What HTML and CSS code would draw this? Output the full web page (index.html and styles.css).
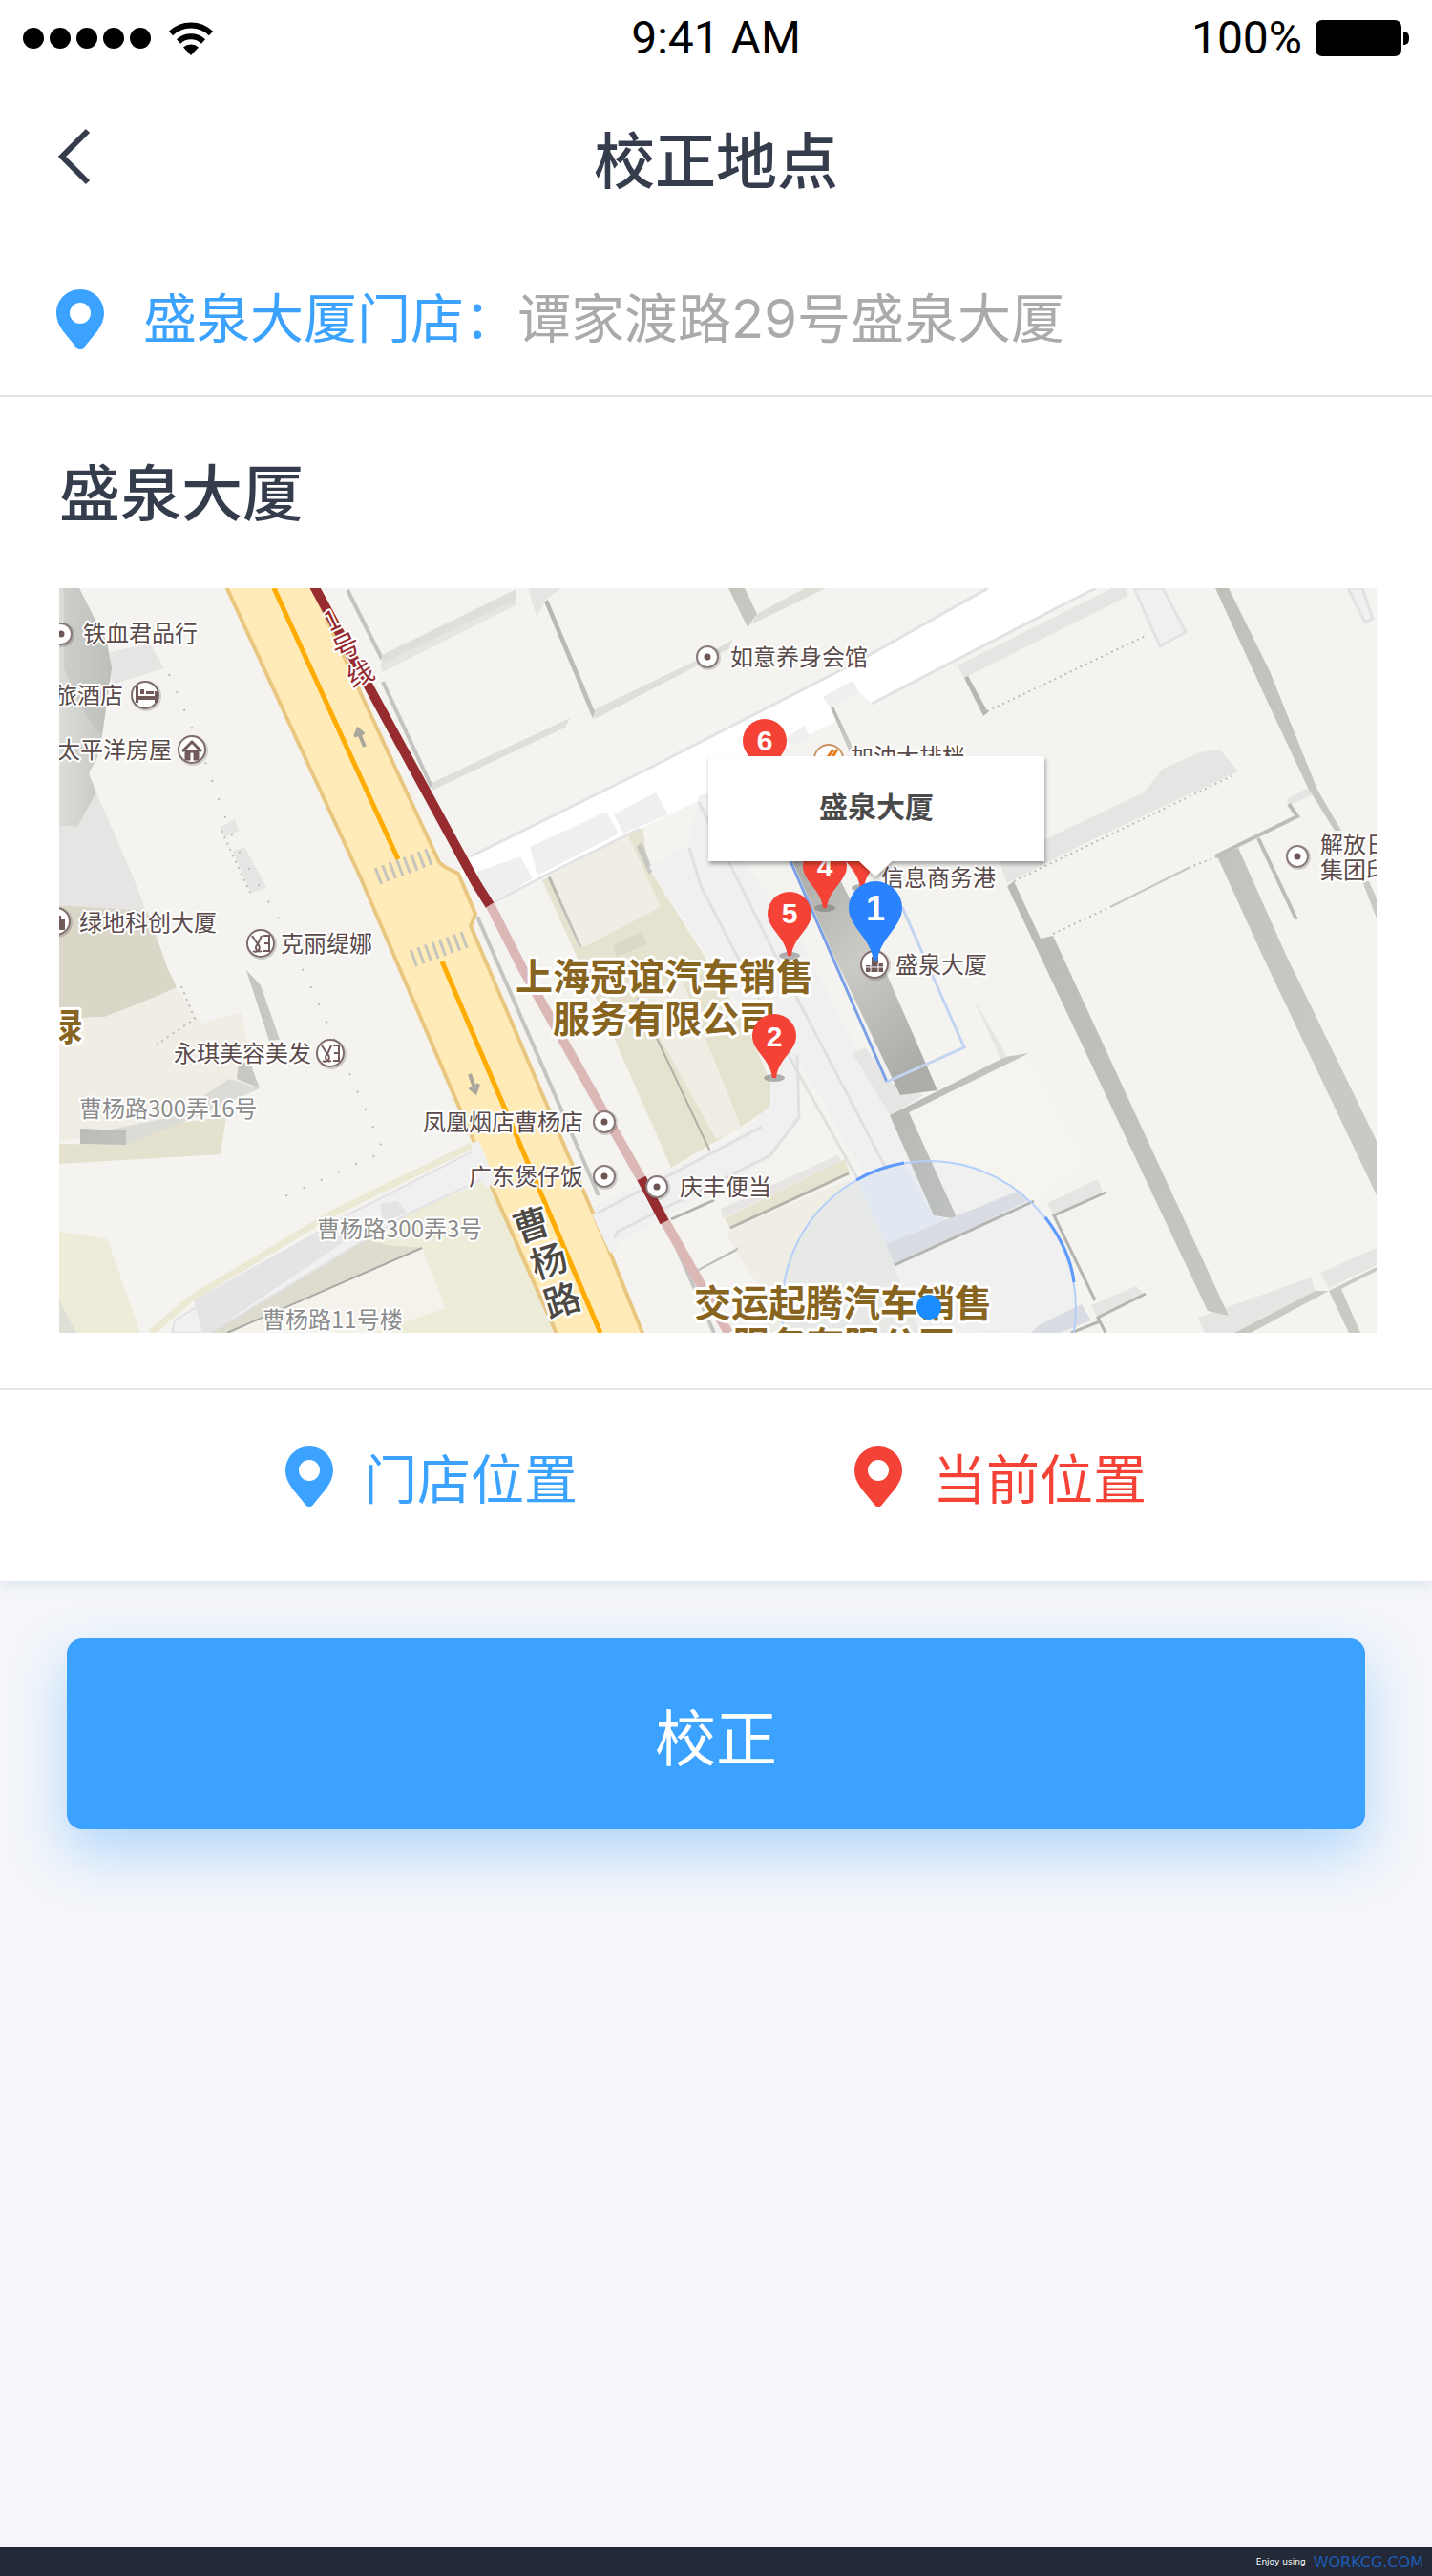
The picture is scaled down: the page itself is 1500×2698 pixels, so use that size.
FILE: index.html
```html
<!DOCTYPE html>
<html lang="zh-CN">
<head>
<meta charset="utf-8">
<meta name="viewport" content="width=device-width, initial-scale=1">
<title>校正地点</title>
<link rel="stylesheet" href="styles.css">
</head>
<body>

<div class="status-bar">
  <div class="status-left">
    <svg class="signal" viewBox="0 0 134 22" aria-hidden="true">
      <circle cx="11" cy="11" r="11"/>
      <circle cx="39" cy="11" r="11"/>
      <circle cx="67" cy="11" r="11"/>
      <circle cx="95" cy="11" r="11"/>
      <circle cx="123" cy="11" r="11"/>
    </svg>
    <svg class="wifi" viewBox="0 0 48 36" aria-hidden="true">
      <path d="M24 36l-8-8.500a12 12 0 0 1 16 0z"/>
      <path d="M3 13a30 30 0 0 1 42 0M11 21.500a19 19 0 0 1 26 0" fill="none" stroke="#000" stroke-width="6"/>
    </svg>
  </div>
  <div class="status-time">9:41 AM</div>
  <div class="status-right">
    <span>100%</span>
    <svg class="battery" viewBox="0 0 98 38" aria-hidden="true">
      <rect width="90" height="38" rx="7"/>
      <path d="M92 12c4 0 6 2 6 7s-2 7-6 7z"/>
    </svg>
  </div>
</div>

<header class="nav">
  <button class="back" type="button" aria-label="返回">
    <svg viewBox="0 0 34 60" aria-hidden="true"><path d="M31 3L4 30l27 27"/></svg>
  </button>
  <h1>校正地点</h1>
</header>

<main>
  <div class="address">
    <svg class="pin blue" viewBox="0 0 50 63" aria-hidden="true"><path d="M25 0C11 0 0 11 0 25c0 14 11 23 21 36 2 3 6 3 8 0 10-13 21-22 21-36C50 11 39 0 25 0zm0 14a11 11 0 1 1 0 22 11 11 0 0 1 0-22z"/></svg>
    <p><span class="blue">盛泉大厦门店：</span>谭家渡路29号盛泉大厦</p>
  </div>

  <section class="place">
    <h2>盛泉大厦</h2>
    <svg class="map" viewBox="62 616 1380 780" role="img" aria-label="盛泉大厦附近地图">
      <defs>
        <linearGradient id="wall" x1="0" y1="0" x2="1" y2="0.4">
          <stop offset="0" stop-color="#b4b6b1"/>
          <stop offset="1" stop-color="#cacac4"/>
        </linearGradient>
        <linearGradient id="tower" x1="0" y1="0" x2="0.6" y2="1">
          <stop offset="0" stop-color="#a9aaa6"/>
          <stop offset="0.5" stop-color="#cbcbc6"/>
          <stop offset="1" stop-color="#adaea9"/>
        </linearGradient>
        <linearGradient id="round" x1="0" y1="0" x2="1" y2="0">
          <stop offset="0" stop-color="#dcddd8"/>
          <stop offset="1" stop-color="#c2c4bf"/>
        </linearGradient>
        <filter id="drop" x="-10%" y="-20%" width="120%" height="150%">
          <feDropShadow dx="1" dy="3" stdDeviation="2" flood-color="#000" flood-opacity="0.35"/>
        </filter>
        <g id="marker">
          <ellipse cx="0" cy="44" rx="11" ry="4" fill="#777" opacity="0.55"/>
          <path d="M0-23a23 23 0 0 0-23 23c0 16 19 24 21 44h4C4 24 23 16 23 0A23 23 0 0 0 0-23z"/>
        </g>
        <g id="dot">
          <circle r="13" cx="1" cy="1" fill="#000" opacity="0.15"/>
          <circle r="11" fill="#fff" stroke="#8a7a7a" stroke-width="2"/>
          <circle r="3.500" fill="#6d5555"/>
        </g>
        <g id="badge">
          <circle r="16" cx="1" cy="1" fill="#000" opacity="0.15"/>
          <circle r="14" fill="#fff" stroke="#806c6c" stroke-width="2"/>
        </g>
        <g id="salon">
          <use href="#badge"/>
          <path d="M-9-8l6 9 4-9M-8 8a3 3 0 1 0 5-7 3 3 0 1 0 4 7M3-8h6V8H3M4 0h5" fill="none" stroke="#725a5a" stroke-width="2"/>
        </g>
      </defs>

      <rect x="62" y="616" width="1380" height="780" fill="#f4f3ef"/>

      <!-- west blocks -->
      <path fill="#e6e5e4" d="M115 683l42-9 15 26-55 17zM62 865l19 1 20-36 39 90 36 95-114-66zM230 867l16-9 4 12-14 7zM244 892l12-5 23 42-16 7z"/>
      <path fill="url(#round)" d="M62 616h21l17 34 12 23 5 27-2 15-8 55-5 23-9 17 8 20-20 36-19-1z"/>
      <path fill="#b4b6b1" opacity="0.35" d="M67 616h16l29 57 5 27-10 70q-20-20-40-70z"/>
      <path fill="#dad7c9" d="M62 949h13l79 5 22 61 9 19-35 16-40 15-48 2z"/>
      <path fill="#efede4" d="M62 1067l48-2 75-30 26 37 42-12 9 48-7 32-42 15-33 25-118 15z"/>
      <path fill="#e4e1cf" d="M62 1198l70 1 38-21 67-8-6 39-169 10z"/>
      <path fill="#dcdcd7" d="M272 1140l-32-10-60 40-70 14-26-2v16l48 1 35-14 50-20z"/>
      <path fill="url(#wall)" d="M84 1182l48 2v15l-48-1zM258 1016l15 16 20 57-11 1zM250 1113h12l10 27-24-10z"/>
      <path fill="#edecd9" d="M62 1290l50 7 35 99H62z"/>
      <path fill="#e0dfd5" d="M62 1362l18 34H62z"/>
      <path fill="none" stroke="#bbb" stroke-width="2" stroke-dasharray="2 18" d="M177 706l30 70 40 110 50 85 50 110 55 125-110 50"/>
      <path fill="none" stroke="#bbb" stroke-width="2" stroke-dasharray="2 5" d="M232 870l30 65M190 1033l14 34-40 27"/>

      <!-- 曹杨路300弄 -->
      <path fill="#edecd9" d="M228 1396l202-126 82-35 72 161z"/>
      <path fill="#dedccf" d="M215 1396l160-100 30 8 37 3-204 89z"/>
      <path fill="#f4f2ea" d="M238 1396l204-89 25 63-77 26z"/>
      <path fill="none" stroke="#aaa9a3" stroke-width="2" d="M238 1396l204-89"/>
      <path fill="none" stroke="#ebe8d3" stroke-width="7" d="M494 1200l-144 70-150 90-42 36"/>
      <path fill="#f0f0f1" stroke="#e2e2e4" stroke-width="2" d="M497 1205l-142 72-172 106-3 13h40l210-126 86-40z"/>
      <path fill="#e4e4e4" d="M203 1362l120-67 50-3-153 104h-8zM398 1261l18-3 10 12-25 10z"/>

      <!-- north blocks -->
      <path fill="none" stroke="#c3c4c0" stroke-width="4" d="M364 618l36 72M401 714l51 110"/>
      <path fill="#dfdfda" d="M400 686l141-69v11l-141 69zM452 820l145-68-5 10-140 66zM621 744l112-54 34-20-4 10-140 73zM793 643l50-27h22l-78 38z"/>
      <path fill="url(#wall)" d="M570 630l4-2 49 117-2 8zM763 616h17l13 27-10 14z"/>
      <path fill="#e6e5e4" d="M400 704l140-70v-6l-142 68zM553 616h35l-16 12-10 18z"/>

      <!-- white road -->
      <path fill="#fff" d="M493 897l407-205 135-76h115l-30 14-207 107-70 35-110 66-63 30-95 47-58 30-37-30z"/>
      <path fill="none" stroke="#e2e2e4" stroke-width="3" d="M493 897l190-94 217-111 135-76M913 737l207-107 28-14M517 945l58-30 95-47"/>
      <path fill="#efefef" d="M555 887l80-37 13 23-85 44zM643 853l44-23 13 23-47 20zM500 913l45-16 13 23-41 25-15-10zM862 730l31-17 7 12-30 17zM822 774l20-14 7 12-20 10z"/>
      <path fill="#f4f3ef" d="M870 742l30-17 13 12-8 50-14 5z"/>
      <path fill="url(#wall)" d="M870 741l3-1 18 38 3 10h-4z"/>

      <!-- dealership plot -->
      <path fill="#e5e3cf" d="M568 922l105-55 7 43 57 90 46 77 24 56v27l-34 22-70 41-60-136z"/>
      <path fill="#efede4" d="M577 917l81-42 34 75-82 43zM668 1045l46-20 63 157-27 11z"/>
      <path fill="#dad8c8" d="M642 990l30-14 6 13-32 13z"/>
      <path fill="#f4f3ef" d="M675 880l38-20 9 28-42 24z"/>
      <path fill="url(#wall)" d="M576 917l34 76-4-3-32-70zM667 887l5-5 12 30-4 4z"/>
      <path fill="none" stroke="#b0b0a9" stroke-width="2" d="M668 1045l84 178"/>

      <!-- inner lanes -->
      <path fill="#f0f0f1" d="M680 908l42-24 10-51 12-2 116 71 105 250 18 100-53 23-97-172 5 25v45l-33 42-168 92-17-42 153-75 37-35-2-30-25-60z"/>
      <path fill="#f4f3ef" d="M735 842l12-8 80 60 60 130 30 76-17 5-60-120z"/>
      <path fill="none" stroke="#e0e0e1" stroke-width="3" d="M722 888l12 40 96 185 90 160 27-13-115-220-100-200M835 1105l2 65-30 40-160 80-12 20M623 1272l137-72 38-20"/>
      <path fill="#e5e3cf" d="M759 1276l126-62 5 15-125 58z"/>
      <path fill="#e6e5e4" d="M755 1266l122-56 4 6-124 60z"/>
      <path fill="#efede4" d="M760 1290l130-55-10 60-80 60-20-30z"/>
      <path fill="#ecede5" d="M885 1238l20 0 80 158H800q20-90 85-158z"/>
      <path fill="none" stroke="#b4b4ac" stroke-width="3" d="M765 1286l124-57M703 1277l45-20"/>
      <path fill="#bcbdb9" d="M724 1333l50-27-2 4-44 23z"/>
      <path fill="#e6e5e4" d="M893 1103l14-6 23 36 37 14-35 21z"/>

      <!-- main tower and south blocks -->
      <path fill="url(#tower)" d="M830 902h40l50 98 62 142-39 5-70-147z"/>
      <path fill="none" stroke="#7aa1e8" stroke-width="3" d="M828 902l101 231"/>
      <path fill="none" stroke="#c3d4f3" stroke-width="3" d="M929 1133l81-36-65-147"/>
      <path fill="#f5f4ef" d="M952 1166l126-60 60 110-53 42-83 20z"/>
      <path fill="url(#wall)" d="M932 1168l121-61 25-4-126 62 51 112-25-4z"/>
      <path fill="#e6e5e4" d="M1018 1042l37 65-7 2zM1097 1260l53-25 5 13-52 24zM1143 1367l47-20 8 8-48 25z"/>

      <circle cx="973" cy="1370" r="154" fill="#4c8cff" fill-opacity="0.03"/>
      <path fill="#e1e8f1" d="M897 1235l50-16 31 54 20 6-70 24z"/>
      <path fill="#d9dde3" d="M928 1303l140-56 10 10-141 68zM1088 1388l45-22 10 17-33 13h-30z"/>
      <path fill="#f0f0f0" d="M937 1327l143-68 30 40 14 67-40 24-90 6h-30z"/>
      <path fill="none" stroke="#b4b4b0" stroke-width="3" d="M937 1325l146-67M1158 1249l-54 24 43 89M1200 1355l-50 25 8 16M1122 1396l30-12"/>
      <circle cx="973" cy="1370" r="154" fill="none" stroke="#b5cffa" stroke-width="2"/>
      <path fill="none" stroke="#5f9bff" stroke-width="3" d="M1095 1275q26 34 30 68M897 1236q22-13 50-18"/>

      <!-- east blocks -->
      <path fill="#e6e5e4" d="M1003 697l162-81h15v9l-170 85zM1055 925l-8-22 50-25 101-48 20-25 39-17 21-3 19 23-160 75zM1348 837l22-12 5 7-25 12zM1255 1380l118-42 5 14-85 44h-31zM1383 1333l59-26v18l-50 24z"/>
      <path fill="url(#wall)" d="M1010 710l4-2 21 38-5 4zM1273 616h14l43 87 50 124 25 43h-7l-28-45-40-85zM1427 923h7l8 18v21zM1275 897l22-9 50 112 95 195v57l-120-252zM1055 928l7-5 28 60 13-3 184 398-22-5zM1293 1396l85-44h14l-82 44zM1392 1352l50-25v4l-37 19 20 46h-12z"/>
      <path fill="#f0f0f1" stroke="#e2e2e4" stroke-width="3" d="M1188 616l27 61 27-15-24-46zM1412 616l18 36 8-4-11-32z"/>
      <path fill="none" stroke="#bcbdb9" stroke-width="4" d="M1273 897l86-42-9-13M1318 878l40 85"/>
      <path fill="none" stroke="#bcbdb9" stroke-width="2" stroke-dasharray="2 4" d="M1034 745l168-80M1062 923l232-112M1103 978l60-28M1245 909l30-12"/>
      <path fill="none" stroke="#c6c7c3" stroke-width="2" d="M1163 950l82-41"/>

      <!-- 曹杨路 -->
      <path fill="#ffebb8" stroke="#e9c781" stroke-width="4" d="M235 610l143 310 119 277 18 46 72 163h90l-40-99-14-32-130-305 5-13-18-42-14-7-6-5-79-170-56-123z"/>
      <path fill="#f0f0f1" d="M494 1197l8-2 16 40-7 10-16-22zM620 1272l12-3 16 40-9 3z"/>
      <path fill="none" stroke="#ffab00" stroke-width="5" d="M287 616l130 284M463 1007l166 389"/>
      <path fill="none" stroke="#c6c5bd" stroke-width="18" stroke-dasharray="3 5" d="M395 918l58-22M432 1004l58-21"/>
      <path fill="none" stroke="#a9a79c" stroke-width="4" d="M382 782l-6-14m-4 4l3-8 6 5M492 1125l5 14m4-4l-3 9-6-5"/>
      <path fill="none" stroke="#c4c5c2" stroke-width="4" d="M500 960l127 292M697 1280l51 116"/>

      <!-- metro line -->
      <path fill="none" stroke="#dbb8b5" stroke-width="10" d="M513 947l34 67 125 221 25 45 66 116"/>
      <path fill="none" stroke="#962c2f" stroke-width="10" d="M328 612l170 312 15 24M672 1234l24 46"/>

      <g class="metro-name">
        <text transform="translate(345 662) rotate(-25)">1</text>
        <text transform="translate(354 692) rotate(-25)">号</text>
        <text transform="translate(369 721) rotate(-25)">线</text>
      </g>
      <g class="road-name">
        <text transform="translate(543 1302) rotate(-18)">曹</text>
        <text transform="translate(561 1340) rotate(-18)">杨</text>
        <text transform="translate(575 1381) rotate(-18)">路</text>
      </g>

      <g class="poi">
        <text x="87" y="672">铁血君品行</text>
        <text x="57" y="737">旅酒店</text>
        <text x="60" y="794">太平洋房屋</text>
        <text x="83" y="975">绿地科创大厦</text>
        <text x="294" y="997">克丽缇娜</text>
        <text x="182" y="1112">永琪美容美发</text>
        <text x="443" y="1184">凤凰烟店曹杨店</text>
        <text x="491" y="1241">广东煲仔饭</text>
        <text x="712" y="1252">庆丰便当</text>
        <text x="765" y="697">如意养身会馆</text>
        <text x="891" y="801">加油大排档</text>
        <text x="923" y="928">信息商务港</text>
        <text x="938" y="1019">盛泉大厦</text>
        <text x="1383" y="893">解放日报</text>
        <text x="1383" y="920">集团印务</text>
      </g>
      <g class="poi lane">
        <text x="83" y="1170">曹杨路300弄16号</text>
        <text x="332" y="1296">曹杨路300弄3号</text>
        <text x="275" y="1391">曹杨路11号楼</text>
      </g>
      <g class="company">
        <text x="47" y="1090">绿</text>
        <text x="540" y="1037">上海冠谊汽车销售</text>
        <text x="579" y="1081">服务有限公司</text>
        <text x="727" y="1379">交运起腾汽车销售</text>
        <text x="767" y="1423">服务有限公司</text>
      </g>

      <use href="#dot" x="64" y="664"/>
      <use href="#dot" x="633" y="1175"/>
      <use href="#dot" x="633" y="1232"/>
      <use href="#dot" x="688" y="1243"/>
      <use href="#dot" x="741" y="688"/>
      <use href="#dot" x="1359" y="897"/>
      <use href="#salon" x="273" y="988"/>
      <use href="#salon" x="346" y="1103"/>
      <use href="#badge" x="152" y="728"/>
      <path fill="#725a5a" d="M142 719h3v10h17v-5h3v12h-3v-3h-17v3h-3zM147 722h4v5h-4zM153 724h8v3h-8z"/>
      <use href="#badge" x="201" y="785"/>
      <path fill="none" stroke="#725a5a" stroke-width="3" d="M191 787l10-10 10 10M195 785v10h3v-8h6v8h3v-10"/>
      <use href="#badge" x="59" y="965"/>
      <path fill="#725a5a" d="M61 959h3v4h4v11h-7z"/>
      <use href="#badge" x="916" y="1010"/>
      <path fill="#725a5a" d="M913 1002h7v7h5v9h-18v-7h6z"/>
      <path stroke="#fff" stroke-width="1" d="M907 1013h18M912 1009v9M920 1009v9"/>
      <circle cx="868" cy="795" r="15" fill="#fff" stroke="#c7925f" stroke-width="2"/>
      <path fill="none" stroke="#e57d22" stroke-width="3" d="M867 793l6-8M872 793l5-8"/>

      <g fill="#f44336">
        <use href="#marker" x="801" y="776"/>
        <use href="#marker" x="903" y="886"/>
        <use href="#marker" x="864" y="907"/>
        <use href="#marker" x="827" y="957"/>
        <use href="#marker" x="811" y="1085"/>
      </g>
      <path fill="#2a82ff" d="M917 923a28 28 0 0 0-28 28c0 20 24 32 26 56h4c2-24 26-36 26-56a28 28 0 0 0-28-28z"/>
      <g class="marker-no">
        <text x="801" y="786">6</text>
        <text x="864" y="918">4</text>
        <text x="827" y="967">5</text>
        <text x="811" y="1096">2</text>
        <text class="big" x="917" y="964">1</text>
      </g>
      <circle cx="973" cy="1369" r="13" fill="#1a8cff"/>

      <path fill="#fff" filter="url(#drop)" d="M742 792h352v110H934l-17 16-17-16H742z"/>
      <text class="info" x="918" y="856">盛泉大厦</text>
    </svg>
  </section>

  <div class="legend">
    <div class="legend-item blue">
      <svg class="pin" viewBox="0 0 50 63" aria-hidden="true"><path d="M25 0C11 0 0 11 0 25c0 14 11 23 21 36 2 3 6 3 8 0 10-13 21-22 21-36C50 11 39 0 25 0zm0 14a11 11 0 1 1 0 22 11 11 0 0 1 0-22z"/></svg>
      <span>门店位置</span>
    </div>
    <div class="legend-item red">
      <svg class="pin" viewBox="0 0 50 63" aria-hidden="true"><path d="M25 0C11 0 0 11 0 25c0 14 11 23 21 36 2 3 6 3 8 0 10-13 21-22 21-36C50 11 39 0 25 0zm0 14a11 11 0 1 1 0 22 11 11 0 0 1 0-22z"/></svg>
      <span>当前位置</span>
    </div>
  </div>
</main>

<div class="actions">
  <button class="submit" type="button">校正</button>
</div>

<footer class="credit">
  <span>Enjoy using</span>
  <a href="#">WORKCG.COM</a>
</footer>

</body>
</html>
```
FILE: styles.css
```css
* {
  box-sizing: border-box;
}

body {
  display: flex;
  flex-direction: column;
  min-height: 100vh;
  margin: 0;
  background: #f4f6fa;
  color: #353d4d;
  font-family: "Noto Sans CJK SC", sans-serif;
}

h1, h2, p {
  margin: 0;
}

h1, h2 {
  font-size: 64px;
  font-weight: 500;
  line-height: 80px;
}

button {
  border: 0;
  padding: 0;
  font-family: inherit;
  cursor: pointer;
}

.blue {
  color: #3ba2ff;
}

.red {
  color: #f44336;
}

/* status bar */
.status-bar {
  display: grid;
  grid-template-columns: 1fr auto 1fr;
  align-items: center;
  height: 80px;
  padding: 0 24px;
  background: #fff;
  color: #000;
  font-family: Roboto, sans-serif;
  font-size: 48px;
  line-height: 80px;
}

.status-left, .status-right {
  display: flex;
  align-items: center;
}

.status-left {
  gap: 18px;
}

.status-right {
  justify-content: flex-end;
  gap: 14px;
}

.signal {
  width: 134px;
  height: 22px;
}

.wifi {
  width: 48px;
  height: 36px;
}

.battery {
  width: 98px;
  height: 38px;
}

/* title bar */
.nav {
  position: relative;
  display: flex;
  align-items: center;
  justify-content: center;
  height: 168px;
  background: #fff;
}

.back {
  position: absolute;
  left: 61px;
  display: flex;
  background: none;
}

.back svg {
  width: 34px;
  height: 60px;
  fill: none;
  stroke: #353d4d;
  stroke-width: 6;
}

main {
  background: #fff;
  box-shadow: 0 4px 12px rgba(40, 90, 110, 0.1);
}

.pin {
  flex: none;
  width: 50px;
  height: 63px;
  fill: currentColor;
}

.address {
  display: flex;
  align-items: center;
  gap: 41px;
  padding: 46px 59px 40px;
  border-bottom: 2px solid #e5e5e5;
  color: #aaa;
  font-family: Inter, "Noto Sans CJK SC", sans-serif;
  font-size: 56px;
  line-height: 80px;
}

.place {
  padding: 56px 58px 58px 62px;
  border-bottom: 2px solid #e5e5e5;
}

.map {
  display: block;
  width: 100%;
  margin-top: 64px;
}

.legend {
  display: flex;
  justify-content: center;
  gap: 290px;
  padding: 50px 58px 70px;
  font-size: 56px;
  line-height: 80px;
}

.legend-item {
  display: flex;
  align-items: center;
  gap: 32px;
}

/* map labels */
.map text {
  paint-order: stroke;
  stroke: #fff;
  stroke-linejoin: round;
}

.poi text {
  fill: #5a4a4a;
  font-size: 24px;
  stroke-width: 4px;
}

.lane text {
  fill: #8c8c8c;
}

.company text {
  fill: #876420;
  font-size: 39px;
  font-weight: 700;
  stroke-width: 6px;
}

.road-name text {
  fill: #4d4a45;
  font-size: 38px;
  font-weight: 500;
  stroke-width: 5px;
}

.metro-name text {
  fill: #962c2f;
  font-size: 28px;
  stroke-width: 4px;
}

.marker-no text {
  fill: #fff;
  font-family: "Liberation Sans", sans-serif;
  font-size: 30px;
  font-weight: 700;
  stroke: none;
  text-anchor: middle;
}

.marker-no .big {
  font-size: 36px;
}

.map .info {
  fill: #4a4a4a;
  font-size: 30px;
  font-weight: 700;
  stroke: none;
  text-anchor: middle;
}

/* submit */
.actions {
  flex: 1;
  padding: 60px 70px;
}

.submit {
  width: 100%;
  height: 200px;
  border-radius: 16px;
  background: #3ba2ff;
  box-shadow: 0 24px 56px rgba(59, 162, 255, 0.36);
  color: #fff;
  font-size: 64px;
}

.credit {
  display: flex;
  align-items: center;
  justify-content: flex-end;
  gap: 8px;
  height: 30px;
  padding: 0 9px;
  background: #232936;
  color: #fff;
  font-family: "DejaVu Sans", sans-serif;
  font-size: 9px;
}

.credit a {
  color: #1e5cb8;
  font-size: 16px;
  text-decoration: none;
}
```
